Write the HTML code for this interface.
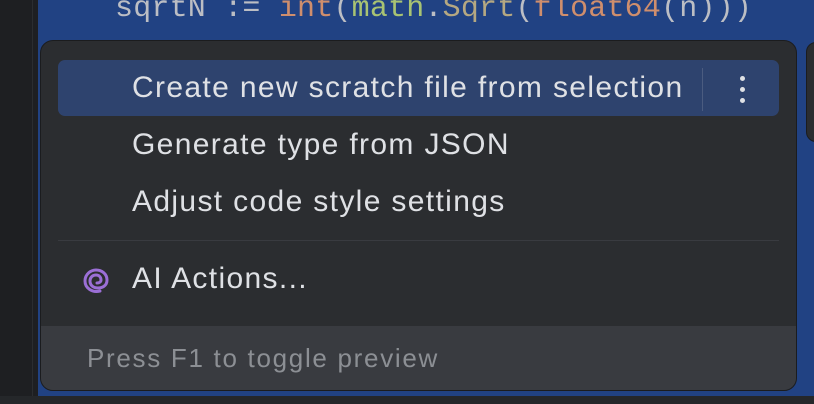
<!DOCTYPE html>
<html><head><meta charset="utf-8"><style>
*{margin:0;padding:0;box-sizing:border-box}
body{width:814px;height:404px;overflow:hidden;background:#1e1f22;position:relative;font-family:"Liberation Sans",sans-serif}
.left{position:absolute;left:0;top:0;width:33px;height:404px;background:#1e1f22;border-right:1px solid #2b2d30}
.ed{position:absolute;left:38px;top:0;width:776px;height:396px;background:#214283}
.bot{position:absolute;left:0;top:396px;width:814px;height:8px;background:#25272a}
.code{position:absolute;left:115px;top:-8px;font-family:"Liberation Mono",monospace;font-size:30px;color:#bcbec4;white-space:pre;letter-spacing:0.2px}
.k{color:#cf8e6d}.g{color:#a8c373}.f{color:#b5a882}
.pop{position:absolute;left:40px;top:40px;width:757px;height:351px;background:#2b2d30;border-radius:13px;border:1px solid #1b1c1e;overflow:hidden}
.rp{position:absolute;left:806px;top:42px;width:20px;height:100px;background:#2b2d30;border-radius:10px;border:1px solid #1b1c1e}
.sel{position:absolute;left:17px;top:19px;width:721px;height:56px;background:#2e436e;border-radius:7px}
.item{position:absolute;left:91px;font-size:30px;color:#dfe1e5;letter-spacing:1.35px}
.vl{position:absolute;left:661px;top:27px;width:1px;height:43px;background:#4b5c80}
.dot{position:absolute;left:699px;width:5px;height:5px;border-radius:50%;background:#dfe1e5}
.sep{position:absolute;left:17px;top:199px;width:721px;height:1px;background:#393b40}
.foot{position:absolute;left:0;top:285px;width:757px;height:66px;background:#393b40}
.ft{position:absolute;left:46px;top:17px;font-size:26px;color:#8c8f94;letter-spacing:1.7px}
</style></head><body>
<div class="left"></div>
<div class="ed"></div>
<div class="bot"></div>
<div class="code">sqrtN := <span class="k">int</span>(<span class="g">math</span>.<span class="f">Sqrt</span>(<span class="k">float64</span>(n)))</div>
<div class="rp"></div>
<div class="pop">
 <div class="sel"></div>
 <div class="item" style="top:30px">Create new scratch file from selection</div>
 <div class="vl"></div>
 <div class="dot" style="top:35px"></div><div class="dot" style="top:46px"></div><div class="dot" style="top:57px"></div>
 <div class="item" style="top:87px">Generate type from JSON</div>
 <div class="item" style="top:144px">Adjust code style settings</div>
 <div class="sep"></div>
 <svg style="position:absolute;left:41px;top:226px" width="28" height="28" viewBox="0 0 28 28" fill="none" stroke="#9b6fd6" stroke-width="3" stroke-linecap="round"><path d="M18 24 C10 26 3 21 3 14 C3 7 9 3 14 3 C20 3 25 7 25 13 C25 19 20 21 16 21 C11 21 8 18 8 14 C8 10 11 8 14 8 C17 8 19 10 19 13 C19 15 17 16 15 16"/></svg>
 <div class="item" style="top:221px">AI Actions...</div>
 <div class="foot"><div class="ft">Press F1 to toggle preview</div></div>
</div>
</body></html>
